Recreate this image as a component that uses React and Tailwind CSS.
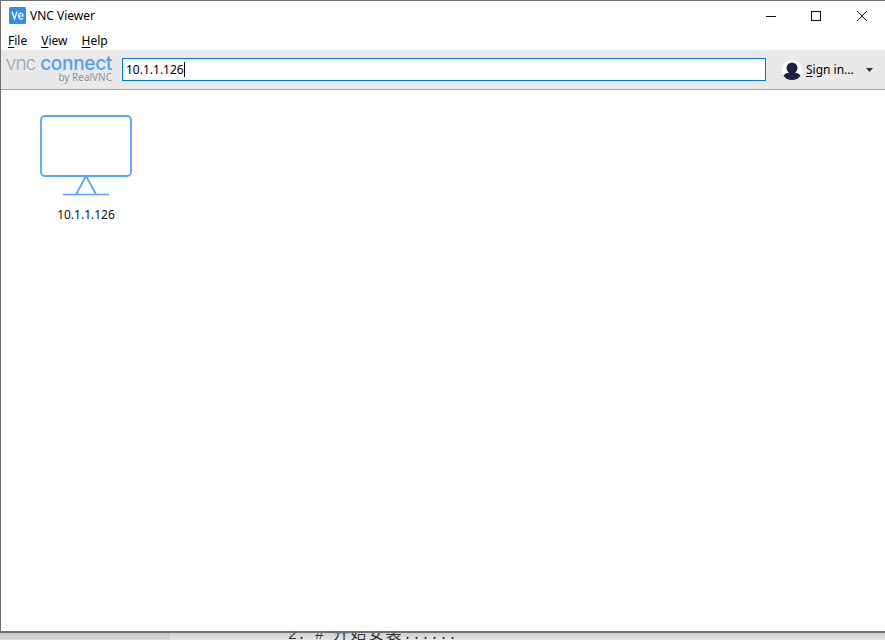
import React from "react";

const ui = { fontFamily: '"Noto Sans", "Open Sans", "Liberation Sans", sans-serif' };

function Mnemonic({ first, rest }) {
  return (
    <span>
      <span className="underline underline-offset-2 decoration-1">{first}</span>
      {rest}
    </span>
  );
}

export default function App() {
  return (
    <div className="w-[885px] h-[640px] overflow-hidden flex flex-col bg-[#d9d9d9]" style={ui}>
      <div className="h-[633px] flex flex-col bg-white border-t border-l border-b-2 border-[#6f6f6f] shrink-0">
        <div className="h-[29px] flex items-center shrink-0">
          <svg width="17" height="17" viewBox="0 0 17 17" className="ml-[8px]">
            <rect width="17" height="17" rx="1.5" fill="#2f8ff0" />
            <path d="M3 4.5 L5.5 12 L8 4.5" fill="none" stroke="#fff" strokeWidth="1.3" />
            <path d="M9.5 9H14C14 5.5 9.5 5 9.5 9C9.5 12.5 12.5 12.5 14 11.5" fill="none" stroke="#fff" strokeWidth="1.2" />
          </svg>
          <span className="ml-[4px] text-[12px] text-black">VNC Viewer</span>
          <div className="ml-auto flex items-center">
            <svg width="12" height="12" viewBox="0 0 12 12" className="mr-[33px]"><path d="M1 6.5H11" stroke="#111" strokeWidth="1" /></svg>
            <svg width="12" height="12" viewBox="0 0 12 12" className="mr-[34px]"><rect x="1.5" y="1.5" width="9" height="9" fill="none" stroke="#111" strokeWidth="1" /></svg>
            <svg width="12" height="12" viewBox="0 0 12 12" className="mr-[17px]"><path d="M1 1L11 11M11 1L1 11" stroke="#111" strokeWidth="1" /></svg>
          </div>
        </div>
        <div className="h-[20px] pt-[2px] flex items-center gap-[14px] pl-[7px] text-[12px] text-black shrink-0">
          <Mnemonic first="F" rest="ile" />
          <Mnemonic first="V" rest="iew" />
          <Mnemonic first="H" rest="elp" />
        </div>
        <div className="h-[40px] flex items-center bg-[#e9e9e9] border-b border-[#a6a6a6] shrink-0">
          <div className="w-[121px] pr-[10px] flex flex-col items-end -mt-[1px]">
            <div className="h-[15px] leading-[15px] text-[19px] whitespace-nowrap flex items-center gap-[5px]" style={{ fontFamily: 'Inter, sans-serif' }}>
              <span className="text-[#9aa6b2] font-light tracking-[-1px]">vnc</span>
              <span className="text-[#4ea3f2] font-medium tracking-[-0.3px]">connect</span>
            </div>
            <div className="h-[12px] leading-[12px] text-[10px] text-[#8d949c]">by RealVNC</div>
          </div>
          <div className="w-[644px] h-[23px] bg-white border border-[#0078d7] flex items-center pl-[3px] text-[12px] text-black">
            <span>10.1.1.126</span>
            <span className="w-px h-[15px] bg-black"></span>
          </div>
          <svg width="20" height="20" viewBox="0 0 20 20" className="ml-[16px]">
            <circle cx="10" cy="10" r="10" fill="#fbfbfb" />
            <circle cx="10" cy="8" r="5.5" fill="#1c2340" />
            <path d="M1.5 15.5C3 13 7 12.5 10 12.5C13 12.5 17 13 18.5 15.5C15.5 21.5 4.5 21.5 1.5 15.5Z" fill="#1c2340" />
          </svg>
          <span className="ml-[4px] text-[12px] text-black whitespace-nowrap"><Mnemonic first="S" rest="ign in..." /></span>
          <svg width="7" height="4" viewBox="0 0 7 4" className="ml-[12px]"><path d="M0 0H7L3.5 4Z" fill="#333" /></svg>
        </div>
        <div className="flex-1 bg-white pl-[39px] pt-[25px]">
          <div className="w-[92px] flex flex-col items-center">
            <svg width="92" height="81" viewBox="0 0 92 81">
              <rect x="1" y="1" width="90" height="60" rx="4" fill="#fff" stroke="#55a5fb" strokeWidth="1.8" />
              <path d="M46 61L36 79.5M46 61L56 79.5M23 79.5H69" fill="none" stroke="#55a5fb" strokeWidth="1.7" />
            </svg>
            <span className="mt-[11px] text-[12px] leading-[16px] text-[#111]">10.1.1.126</span>
          </div>
        </div>
      </div>
      <div className="flex-1 flex overflow-hidden">
        <div className="w-[170px] bg-gradient-to-b from-[#c4c4c4] to-[#d8d8d8]"></div>
        <div className="flex-1 bg-gradient-to-b from-[#cfcfcf] to-[#e6e6e6] pl-[118px] overflow-hidden">
          <div className="-mt-[9px] text-[15px] leading-[16px] text-[#333] whitespace-nowrap" style={{ fontFamily: '"Liberation Mono", monospace' }}>
            2. # <span className="text-[16px] tracking-[1.5px]" style={{ fontFamily: '"Noto Sans CJK SC", sans-serif' }}>开始安装</span>......
          </div>
        </div>
      </div>
    </div>
  );
}
